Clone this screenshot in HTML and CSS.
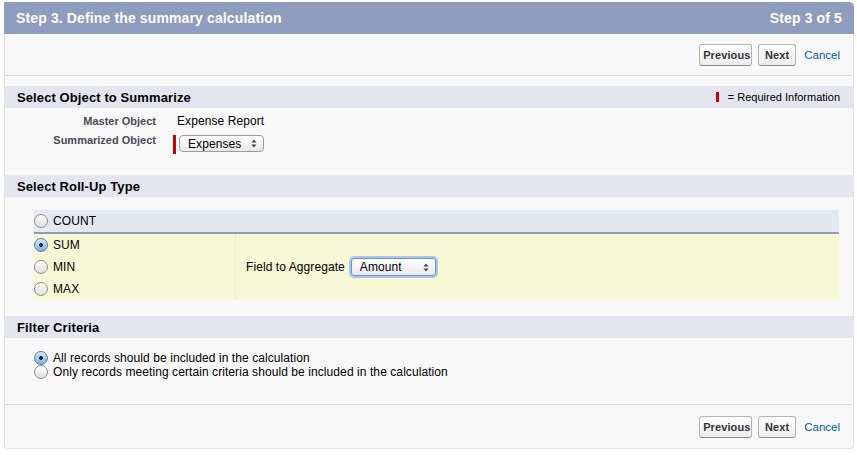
FILE: index.html
```html
<!DOCTYPE html>
<html>
<head>
<meta charset="utf-8">
<link rel="stylesheet" href="styles.css">
</head>
<body>
<div class="panel">
  <div class="header">
    <h2 class="title">Step 3. Define the summary calculation</h2>
    <span class="step">Step 3 of 5</span>
  </div>
  <div class="btnbar top">
    <button class="btn btn-prev">Previous</button>
    <button class="btn btn-next">Next</button>
    <a class="cancel" href="#">Cancel</a>
  </div>
  <div class="pbbody">
    <div class="subhead">
      <h3>Select Object to Summarize</h3>
      <span class="req"><span class="reqbar"></span>= Required Information</span>
    </div>
    <div class="detail">
      <div class="lbl lbl1">Master Object</div>
      <div class="val val1">Expense Report</div>
      <div class="lbl lbl2">Summarized Object</div>
      <div class="val val2">
        <span class="reqbar tall"></span>
        <div class="select sel-exp"><span>Expenses</span>
          <svg class="arr" width="6" height="9" viewBox="0 0 6 9"><path d="M3 0.5 L5.5 3.5 H0.5 Z M3 8.5 L5.5 5.5 H0.5 Z" fill="#444"/></svg>
        </div>
      </div>
    </div>
    <div class="subhead"><h3>Select Roll-Up Type</h3></div>
    <div class="rollup">
      <div class="countrow">
        <label class="opt"><span class="radio"></span>COUNT</label>
      </div>
      <div class="yellow">
        <div class="opts">
          <label class="opt"><span class="radio on"></span>SUM</label>
          <label class="opt"><span class="radio"></span>MIN</label>
          <label class="opt"><span class="radio"></span>MAX</label>
        </div>
        <div class="field">
          <span class="flabel">Field to Aggregate</span>
          <div class="select sel-amt"><span>Amount</span>
            <svg class="arr" width="6" height="9" viewBox="0 0 6 9"><path d="M3 0.5 L5.5 3.5 H0.5 Z M3 8.5 L5.5 5.5 H0.5 Z" fill="#444"/></svg>
          </div>
        </div>
      </div>
    </div>
    <div class="subhead filterhead"><h3>Filter Criteria</h3></div>
    <div class="filter">
      <label class="fopt"><span class="radio on"></span>All records should be included in the calculation</label>
      <label class="fopt"><span class="radio"></span>Only records meeting certain criteria should be included in the calculation</label>
    </div>
  </div>
  <div class="btnbar bottom">
    <button class="btn btn-prev">Previous</button>
    <button class="btn btn-next">Next</button>
    <a class="cancel" href="#">Cancel</a>
  </div>
</div>
</body>
</html>
```

FILE: styles.css
```css
html, body {
  margin: 0;
  padding: 0;
  background: #ffffff;
}
body {
  font-family: "Liberation Sans", Arial, Helvetica, sans-serif;
  font-size: 12px;
  color: #000;
  letter-spacing: 0.08px;
}
.panel {
  margin: 2px 0 0 4px;
  width: 850px;
  height: 447px;
  box-sizing: border-box;
  background: #f8f8f8;
  border: 1px solid #e2e2e2;
  border-top: 0;
  border-radius: 0 5px 4px 4px;
  display: flex;
  flex-direction: column;
}
.header {
  margin: 0 -1px;
  height: 32px;
  background: #8e9cbe;
  border-radius: 0 5px 0 0;
  display: flex;
  align-items: center;
  justify-content: space-between;
  padding: 0 12px 0 12px;
  color: #fff;
}
.title {
  margin: 0;
  font-size: 14px;
  font-weight: bold;
  letter-spacing: 0.13px;
}
.step {
  font-size: 14px;
  font-weight: bold;
  letter-spacing: 0.13px;
}
.btnbar {
  display: flex;
  justify-content: flex-end;
  align-items: center;
  padding-right: 13px;
}
.btnbar.top {
  height: 41px;
  border-bottom: 1px solid #dadada;
}
.btnbar.bottom {
  height: 43px;
  border-top: 1px solid #dadada;
}
.btn {
  font-family: "Liberation Sans", Arial, Helvetica, sans-serif;
  font-size: 11px;
  font-weight: bold;
  color: #333;
  height: 22px;
  padding: 0 3px;
  border: 1px solid #b5b5b5;
  border-bottom-color: #8f8f8f;
  border-radius: 3px;
  background: linear-gradient(#ffffff, #ececec);
  box-sizing: border-box;
  margin: 0;
  letter-spacing: 0.1px;
}
.btn-prev {
  width: 53px;
}
.btn-next {
  width: 38px;
  margin-left: 6px;
}
.cancel {
  margin-left: 8px;
  color: #015ba7;
  text-decoration: none;
  font-size: 11.5px;
  letter-spacing: 0;
}
.pbbody {
  padding-top: 10px;
  flex: 1;
}
.subhead {
  height: 22px;
  background: #e3e6ef;
  display: flex;
  align-items: center;
  justify-content: space-between;
  padding: 0 13px 0 12px;
}
.subhead h3 {
  margin: 0;
  font-size: 13px;
  font-weight: bold;
  letter-spacing: 0.1px;
}
.req {
  display: flex;
  align-items: center;
  font-size: 11px;
  letter-spacing: 0;
}
.reqbar {
  display: inline-block;
  width: 3px;
  height: 10px;
  background: #c00;
  margin-right: 9px;
}
.reqbar.tall {
  height: 19px;
  margin: 2px 3px 0 -4px;
}
.detail {
  display: grid;
  grid-template-columns: 161px 1fr;
  row-gap: 4px;
  padding: 5px 0 21px 0;
}
.lbl {
  text-align: right;
  padding-right: 10px;
  font-size: 11px;
  font-weight: bold;
  color: #4a4a56;
  line-height: 14px;
  letter-spacing: 0;
}
.lbl1 {
  line-height: 16px;
}
.val {
  padding-left: 11px;
}
.val1 {
  line-height: 16px;
}
.val2 {
  display: flex;
  align-items: flex-start;
}
.select {
  display: flex;
  align-items: center;
  justify-content: space-between;
  box-sizing: border-box;
  width: 85px;
  height: 17px;
  border: 1px solid #9c9c9c;
  border-radius: 4px;
  background: linear-gradient(#ffffff, #e9e9e9);
  padding: 0 6px 0 8px;
  font-size: 12px;
  color: #000;
}
.sel-exp {
  margin-top: 2px;
}
.sel-amt {
  width: 85px;
  height: 18px;
  border-radius: 3px;
  border-color: #6b93cf;
  box-shadow: 0 0 0 2px #a9c6ef;
  margin-left: 6px;
}
.arr {
  display: block;
}
.rollup {
  margin: 13px 14px 0 29px;
}
.countrow {
  height: 22px;
  background: #e3e9f1;
  border-bottom: 2px solid #8e9cbe;
  display: flex;
  align-items: center;
}
.yellow {
  background: #f7f8d6;
  display: grid;
  grid-template-columns: 202px 1fr;
}
.opts {
  display: flex;
  flex-direction: column;
  border-right: 1px solid #ebedc7;
}
.opt {
  display: flex;
  align-items: center;
  height: 22px;
  font-size: 12px;
}
.radio {
  display: inline-block;
  box-sizing: border-box;
  width: 14px;
  height: 14px;
  border-radius: 50%;
  border: 1px solid #8c8c8c;
  background: linear-gradient(#ffffff, #dedede);
  margin-right: 5px;
  flex: none;
}
.radio.on {
  border-color: #5a7cb0;
  background: radial-gradient(circle at 50% 50%, #1e2a3a 0, #1e2a3a 1.6px, transparent 2.2px), linear-gradient(#d6e6f8, #7fb0e8);
}
.field {
  display: flex;
  align-items: center;
  padding-left: 10px;
}
.flabel {
  font-size: 12px;
}
.filterhead {
  margin-top: 16px;
}
.filter {
  padding: 13px 0 0 29px;
  display: flex;
  flex-direction: column;
}
.fopt {
  display: flex;
  align-items: center;
  height: 14px;
  font-size: 12px;
}
```
